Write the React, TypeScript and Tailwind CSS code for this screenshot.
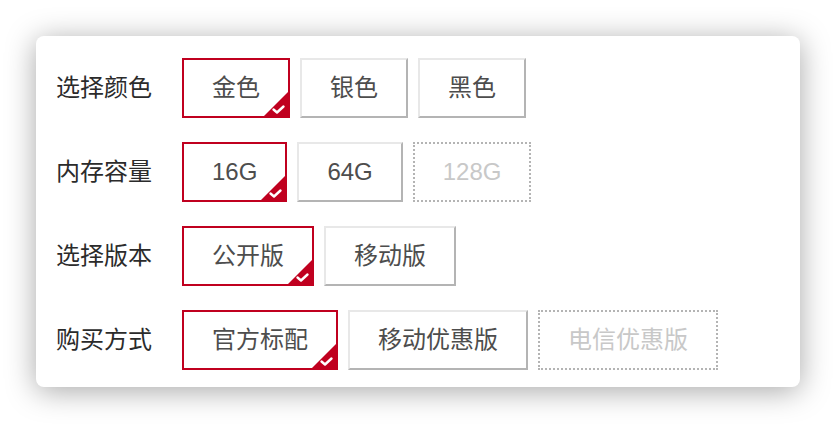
import React from "react";

type Opt = { text: string; state: "selected" | "normal" | "disabled" };

const rows: { label: string; options: Opt[] }[] = [
  {
    label: "选择颜色",
    options: [
      { text: "金色", state: "selected" },
      { text: "银色", state: "normal" },
      { text: "黑色", state: "normal" },
    ],
  },
  {
    label: "内存容量",
    options: [
      { text: "16G", state: "selected" },
      { text: "64G", state: "normal" },
      { text: "128G", state: "disabled" },
    ],
  },
  {
    label: "选择版本",
    options: [
      { text: "公开版", state: "selected" },
      { text: "移动版", state: "normal" },
    ],
  },
  {
    label: "购买方式",
    options: [
      { text: "官方标配", state: "selected" },
      { text: "移动优惠版", state: "normal" },
      { text: "电信优惠版", state: "disabled" },
    ],
  },
];

function Option({ opt }: { opt: Opt }) {
  if (opt.state === "selected") {
    return (
      <div className="relative flex h-[60px] items-center border-2 border-[#c0001f] bg-white px-[28px] text-[24px] leading-none text-[#4d4d4d]">
        {opt.text}
        <svg
          className="absolute bottom-0 right-0"
          width="24"
          height="24"
          viewBox="0 0 24 24"
        >
          <polygon points="24,0 24,24 0,24" fill="#c0001f" />
          <polyline
            points="9.5,17.5 13,20.5 19.5,14.5"
            fill="none"
            stroke="#ffffff"
            strokeWidth="2.4"
            strokeLinecap="round"
            strokeLinejoin="round"
          />
        </svg>
      </div>
    );
  }
  if (opt.state === "disabled") {
    return (
      <div className="flex h-[60px] items-center border-2 border-dotted border-[#b4b4b4] bg-white px-[28px] text-[24px] leading-none text-[#c8c8c8]">
        {opt.text}
      </div>
    );
  }
  return (
    <div className="flex h-[60px] items-center border-2 border-t-[#e8e8e8] border-l-[#e8e8e8] border-r-[#b4b4b4] border-b-[#b4b4b4] bg-white px-[28px] text-[24px] leading-none text-[#4d4d4d]">
      {opt.text}
    </div>
  );
}

export default function App() {
  return (
    <div
      className="min-h-[424px] w-[836px] bg-white p-[36px]"
      style={{ fontFamily: '"Liberation Sans", "Noto Sans CJK SC", sans-serif' }}
    >
      <div className="flex w-[764px] flex-col gap-6 rounded-lg bg-white pb-[17px] pl-5 pt-[22px] shadow-[0_4px_30px_rgba(0,0,0,0.35)]">
        {rows.map((row) => (
          <div key={row.label} className="flex items-center">
            <div className="w-[126px] text-[24px] leading-none text-[#2b2b2b]">
              {row.label}
            </div>
            <div className="flex gap-[10px]">
              {row.options.map((o) => (
                <Option key={o.text} opt={o} />
              ))}
            </div>
          </div>
        ))}
      </div>
    </div>
  );
}
